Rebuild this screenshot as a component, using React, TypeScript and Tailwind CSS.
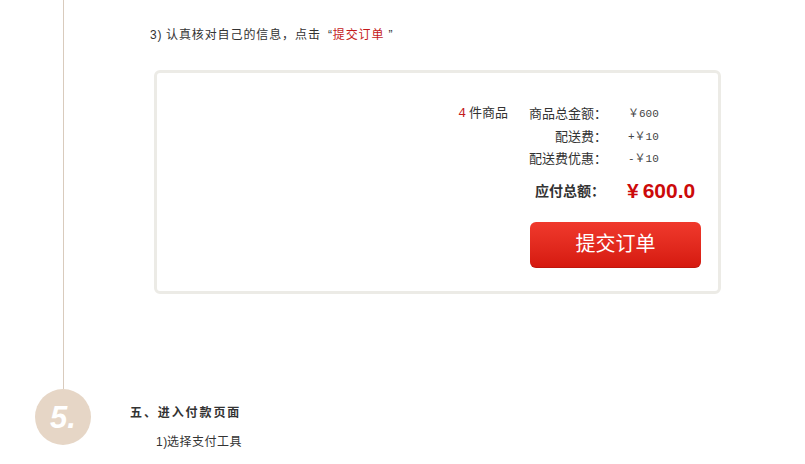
const rows = [
  { label: '商品总金额：', value: '￥600' },
  { label: '配送费：', value: '+￥10' },
  { label: '配送费优惠：', value: '-￥10' },
];

const cjk = { fontFamily: '"Liberation Sans", "Noto Sans CJK SC", sans-serif' };
const mono = { fontFamily: '"Liberation Mono", "Noto Sans CJK SC", monospace' };

export default function App() {
  return (
    <div className="flex h-[464px] w-[805px] overflow-hidden bg-white text-[#333]" style={cjk}>
      {/* timeline */}
      <div className="ml-[35px] flex w-14 flex-col items-center">
        <div className="w-px flex-1 bg-[#d9cbbd]" />
        <div className="mb-[19px] flex h-14 w-14 items-center justify-center rounded-full bg-[#e6d6c6]">
          <span className="text-[31px] font-bold italic leading-none text-white">5.</span>
        </div>
      </div>

      <div className="ml-[39px] flex-1 pt-[26px]">
        <p className="pl-5 text-[12px] leading-[18px] tracking-[0.9px]">
          <span className="inline-block w-[16px]">3)</span>认真核对自己的信息，点击
          <span className="inline-block w-[12px] text-right">“</span>
          <span className="text-[#c41a1a]">提交订单</span>
          <span className="inline-block w-3 pl-1">”</span>
        </p>

        <div className="ml-6 mt-[26px] w-[567px] rounded-[6px] border-[3px] border-[#ecebe6] pb-[23px] pr-[17px] pt-[29px]">
          <div className="flex flex-col items-end text-[13px] leading-[22.5px]">
            {rows.map((r, i) => (
              <div key={r.label} className="flex items-center">
                {i === 0 && (
                  <span className="mr-[21px]">
                    <span className="mr-[3px] text-[#c41a1a]" style={mono}>4</span>件商品
                  </span>
                )}
                <span className="mr-[21px]">{r.label}</span>
                <span className="w-[73px] text-[11px] text-[#444]" style={mono}>{r.value}</span>
              </div>
            ))}
            <div className="mt-[7px] flex h-7 items-center">
              <span className="mr-[22px] text-[14px] font-bold">应付总额：</span>
              <span className="w-[74px] text-[21px] font-bold text-[#cc0a0a]">
                ¥<span className="ml-1">600.0</span>
              </span>
            </div>
            <button className="mt-[16px] flex h-[46px] w-[171px] items-center justify-center rounded-[6px] bg-gradient-to-b from-[#f0392c] to-[#d5180e] text-[20px] text-white shadow-[inset_0_-1px_0_rgba(0,0,0,0.1)]">
              提交订单
            </button>
          </div>
        </div>

        <h3 className="mt-[110px] text-[12px] font-bold leading-[18px] tracking-[1.9px]">五、进入付款页面</h3>
        <p className="mt-[11px] pl-[26px] text-[12px] leading-[18px] tracking-[0.5px]">
          <span className="inline-block w-[11px]">1)</span>选择支付工具
        </p>
      </div>
    </div>
  );
}
